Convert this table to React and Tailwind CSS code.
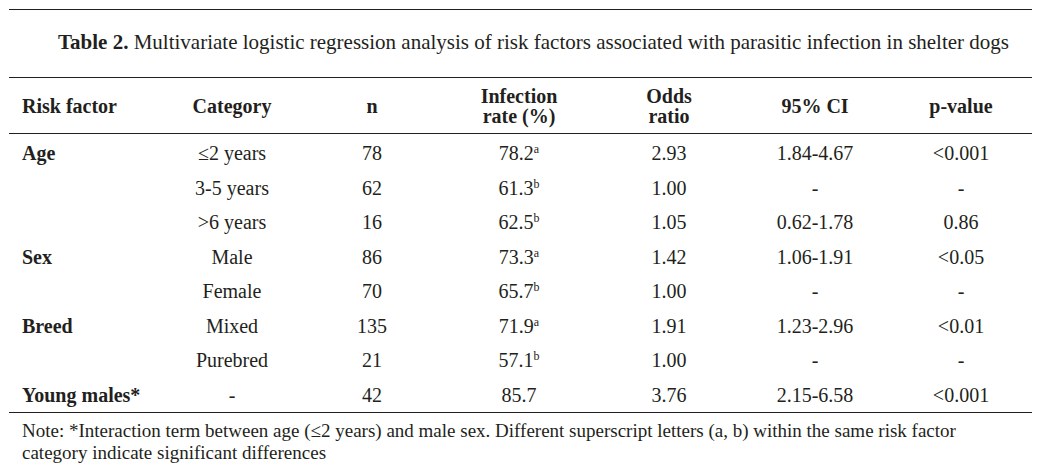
import React from "react";

const rows = [
  ["Age", "≤2 years", "78", "78.2", "a", "2.93", "1.84-4.67", "<0.001"],
  ["", "3-5 years", "62", "61.3", "b", "1.00", "-", "-"],
  ["", ">6 years", "16", "62.5", "b", "1.05", "0.62-1.78", "0.86"],
  ["Sex", "Male", "86", "73.3", "a", "1.42", "1.06-1.91", "<0.05"],
  ["", "Female", "70", "65.7", "b", "1.00", "-", "-"],
  ["Breed", "Mixed", "135", "71.9", "a", "1.91", "1.23-2.96", "<0.01"],
  ["", "Purebred", "21", "57.1", "b", "1.00", "-", "-"],
  ["Young males*", "-", "42", "85.7", "", "3.76", "2.15-6.58", "<0.001"],
];

const grid = "grid grid-cols-[151px_144px_136px_158px_142px_150px_142px]";

export default function App() {
  return (
    <div
      className="w-[1052px] h-[466px] bg-white text-[#231f20] pt-[9px] pl-[9px]"
      style={{ fontFamily: '"Liberation Serif", "Times New Roman", serif' }}
    >
      <div className="w-[1023px]">
        <div className="border-t border-[#231f20] h-[68px] flex items-center pl-[49px] text-[21px] leading-none">
          <span className="whitespace-nowrap -mt-[2px]">
            <span className="font-bold">Table 2.</span> Multivariate logistic regression analysis of risk factors associated with parasitic infection in shelter dogs
          </span>
        </div>
        <div className={`${grid} border-t border-b border-[#231f20] h-[57px] items-center font-bold text-[20px] leading-[20px]`}>
          <div className="pl-[13px]">Risk factor</div>
          <div className="text-center">Category</div>
          <div className="text-center">n</div>
          <div className="text-center">Infection<br />rate (%)</div>
          <div className="text-center">Odds<br />ratio</div>
          <div className="text-center">95% CI</div>
          <div className="text-center">p-value</div>
        </div>
        <div className="border-b border-[#231f20] pt-[2px] text-[20px] leading-none">
          {rows.map((r, i) => (
            <div key={i} className={`${grid} h-[34.5px] items-center`}>
              <div className="pl-[13px] font-bold">{r[0]}</div>
              <div className="text-center">{r[1]}</div>
              <div className="text-center">{r[2]}</div>
              <div className="text-center">
                {r[3]}
                {r[4] && <sup className="text-[12px] relative -top-[7px] align-baseline">{r[4]}</sup>}
              </div>
              <div className="text-center">{r[5]}</div>
              <div className="text-center">{r[6]}</div>
              <div className="text-center">{r[7]}</div>
            </div>
          ))}
        </div>
        <div className="pl-[13px] pt-[7px] text-[19px] leading-[22px]">
          <span className="whitespace-nowrap">Note: *Interaction term between age (≤2 years) and male sex. Different superscript letters (a, b) within the same risk factor</span>
          <br />
          category indicate significant differences
        </div>
      </div>
    </div>
  );
}
